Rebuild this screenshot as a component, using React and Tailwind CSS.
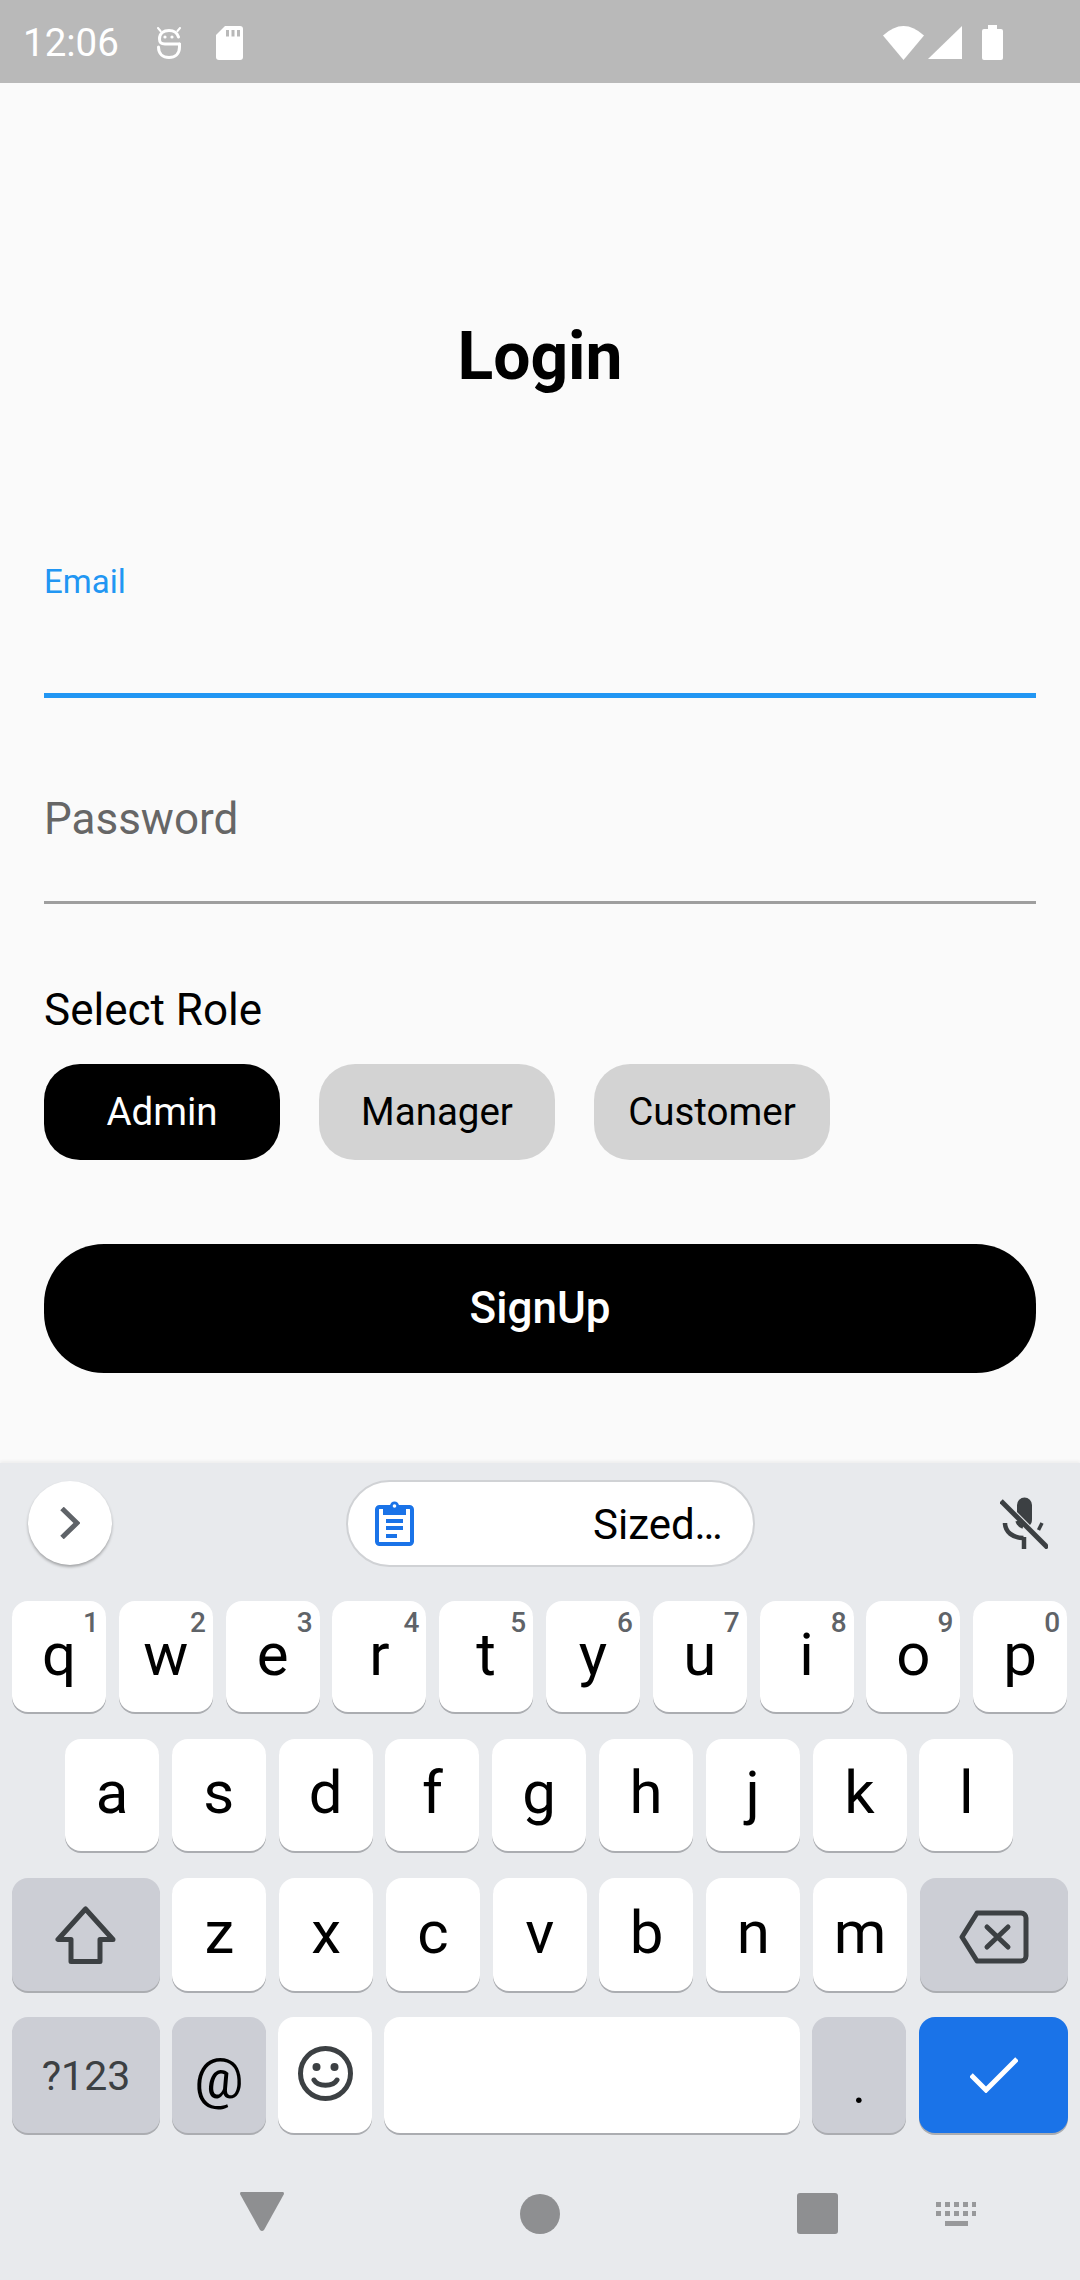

const F = "font-['Roboto',sans-serif]";

function Key({ ch, sup, className = "" }) {
  return (
    <div className={`relative w-[94px] flex-none bg-white rounded-[16px] shadow-[0_2px_0_#abadb1] flex items-center justify-center text-black text-[60px] leading-none pb-1 ${className}`}>
      {ch}
      {sup && <span className="absolute top-[7px] right-[7px] text-[28px] leading-[30px] font-medium text-[#5f6368]">{sup}</span>}
    </div>
  );
}

function Mod({ children, className = "" }) {
  return (
    <div className={`bg-[#ccced5] rounded-[16px] shadow-[0_2px_0_#abadb1] flex items-center justify-center text-[#3c4043] ${className}`}>
      {children}
    </div>
  );
}

function BotIcon() {
  return (
    <svg width="24" height="32" viewBox="0 0 24 32" fill="none" stroke="#fff" strokeWidth="3" strokeLinecap="round">
      <path d="M21.500 10C20 5 16 3.500 12 3.500C7 3.500 2.500 6 2.500 12C2.500 16 4 17 8 17H22.500" />
      <path d="M22.500 17V20C22.500 27 18 30.500 12 30.500C6 30.500 1.500 27 1.500 20" />
      <path d="M1 1l2.500 3M23 1l-2.500 3" strokeWidth="2" />
      <circle cx="8" cy="10" r="1.600" fill="#fff" stroke="none" />
      <circle cx="15" cy="10" r="1.600" fill="#fff" stroke="none" />
    </svg>
  );
}

function SdIcon() {
  return (
    <svg width="27" height="34" viewBox="0 0 27 34">
      <path fill="#fff" d="M9 0H24a3 3 0 0 1 3 3V31a3 3 0 0 1-3 3H3a3 3 0 0 1-3-3V9Z" />
      <path fill="#b9b9b9" d="M10 4h3v6.500h-3zM15.500 4h3v6.500h-3zM21 4h3v6.500h-3z" />
    </svg>
  );
}

function StatusRight() {
  return (
    <div className="ml-auto mr-[77px] flex items-center">
      <svg width="41" height="34" viewBox="0 0 41 34"><path fill="#fff" d="M0 9.500Q20.500 -9.500 41 9.500L20.500 34Z" /></svg>
      <svg className="ml-[4px]" width="34" height="33" viewBox="0 0 34 33"><path fill="#fff" d="M0 33L34 0V33Z" /></svg>
      <svg className="ml-[20px]" width="21" height="35" viewBox="0 0 21 35"><path fill="#fff" d="M6 0H15V4H19a2 2 0 0 1 2 2V33a2 2 0 0 1-2 2H2a2 2 0 0 1-2-2V6a2 2 0 0 1 2-2H6Z" /></svg>
    </div>
  );
}

function Clipboard() {
  return (
    <svg width="39" height="45" viewBox="0 0 39 45" fill="none">
      <rect x="2" y="6" width="35" height="37" rx="2.500" stroke="#1a73e8" strokeWidth="4" />
      <path fill="#1a73e8" d="M8 5H31V14H8Z" />
      <circle cx="19.500" cy="5" r="4.500" fill="#1a73e8" />
      <circle cx="19.500" cy="5" r="1.800" fill="#fff" />
      <path stroke="#1a73e8" strokeWidth="4" d="M11 20H28M11 27H28M11 35H22" />
    </svg>
  );
}

function MicOff() {
  return (
    <svg width="48" height="52" viewBox="0 0 48 52" fill="none" stroke="#3c4043">
      <path fill="#3c4043" stroke="none" d="M17 8A7.500 7.500 0 0 1 32 8V22C32 25 31.500 26.500 30 28L17 15Z" />
      <path strokeWidth="3.500" d="M17 24C18 27 20 29 23 30" />
      <path strokeWidth="4.500" d="M5 26C5 35 13 41 23.500 41" />
      <path strokeWidth="4.500" d="M24 40V52" />
      <path strokeWidth="3.500" d="M42 26L38.500 33" />
      <path strokeWidth="5" d="M1 4L48 51" />
    </svg>
  );
}

export default function App() {
  const row1 = [["q","1"],["w","2"],["e","3"],["r","4"],["t","5"],["y","6"],["u","7"],["i","8"],["o","9"],["p","0"]];
  const row2 = ["a","s","d","f","g","h","j","k","l"];
  const row3 = ["z","x","c","v","b","n","m"];
  return (
    <div className={`w-[1080px] h-[2280px] overflow-hidden flex flex-col bg-[#fafafa] ${F}`}>
      <div className="h-[83px] pt-[2px] bg-[#b9b9b9] flex items-center text-white shrink-0">
        <span className="ml-[23px] pt-[1px] text-[38.5px] leading-none">12:06</span>
        <span className="ml-[38px] flex"><BotIcon /></span>
        <span className="ml-[35px] flex"><SdIcon /></span>
        <StatusRight />
      </div>

      <div className="h-[1380px] shrink-0 px-[44px] flex flex-col">
        <h1 className="mt-[235px] h-[77px] text-center text-[66px] leading-[77px] font-bold text-black">Login</h1>
        <label className="mt-[167px] h-[40px] text-[33px] leading-[40px] text-[#2196f3]">Email</label>
        <div className="mt-[91px] h-[5px] bg-[#2196f3]" />
        <div className="mt-[96px] h-[50px] text-[44px] leading-[50px] text-[#666666]">Password</div>
        <div className="mt-[57px] h-[3px] bg-[#9e9e9e]" />
        <div className="mt-[81px] h-[50px] text-[44px] leading-[50px] text-black">Select Role</div>
        <div className="mt-[29px] flex gap-[39px]">
          <div className="w-[236px] h-[96px] rounded-[36px] bg-black text-white text-[38.5px] flex items-center justify-center">Admin</div>
          <div className="w-[236px] h-[96px] rounded-[36px] bg-[#d3d3d3] text-black text-[38.5px] flex items-center justify-center">Manager</div>
          <div className="w-[236px] h-[96px] rounded-[36px] bg-[#d3d3d3] text-black text-[38.5px] flex items-center justify-center">Customer</div>
        </div>
        <div className="mt-[84px] h-[129px] pb-[2px] rounded-[60px] bg-black text-white text-[44px] font-medium flex items-center justify-center">SignUp</div>
      </div>

      <div className="flex-1 bg-[#e8eaed] flex flex-col shadow-[0_-2px_3px_rgba(0,0,0,0.05)]">
        <div className="h-[120px] flex items-center">
          <div className="ml-[28px] w-[84px] h-[84px] rounded-full bg-white shadow-[0_2px_3px_rgba(0,0,0,0.3)] flex items-center justify-center">
            <svg width="20" height="32" viewBox="0 0 20 32" fill="none" stroke="#5f6368" strokeWidth="5"><path d="M2 1.500L17 16L2 30.500" /></svg>
          </div>
          <div className="ml-[234px] w-[409px] h-[87px] rounded-full bg-white border-2 border-[#d0d2d5] flex items-center pl-[27px]">
            <Clipboard />
            <span className="ml-[179px] pt-[3px] text-[42px] text-black leading-none">Sized…</span>
          </div>
          <div className="ml-[245px] flex"><MicOff /></div>
        </div>

        <div className="mt-[18px] px-[12px] flex gap-[12.8px] h-[111px]">
          {row1.map(([c, s]) => <Key key={c} ch={c} sup={s} />)}
        </div>
        <div className="mt-[27px] px-[65px] flex gap-[12.8px] h-[112px]">
          {row2.map((c) => <Key key={c} ch={c} />)}
        </div>
        <div className="mt-[27px] px-[12px] flex gap-[12.8px] h-[113px]">
          <Mod className="w-[147.5px] shrink-0">
            <svg width="61" height="58" viewBox="0 0 61 58" fill="none" stroke="#3c4043" strokeWidth="5" strokeLinejoin="round"><path d="M30.500 3L3 33.500H16V55.500H45V33.500H58Z" /></svg>
          </Mod>
          {row3.map((c) => <Key key={c} ch={c} />)}
          <Mod className="w-[148.5px] shrink-0 pt-[4px]">
            <svg width="70" height="54" viewBox="0 0 70 54" fill="none" stroke="#3c4043" strokeWidth="5" strokeLinejoin="round" strokeLinecap="round"><path d="M3 27L18 3H62a5 5 0 0 1 5 5V46a5 5 0 0 1-5 5H18Z" /><path d="M28 17L49 37M49 17L28 37" /></svg>
          </Mod>
        </div>
        <div className="mt-[26px] px-[12px] flex gap-[12px] h-[116px]">
          <Mod className="w-[148px] shrink-0 text-[41px] leading-none pt-[2px]">?123</Mod>
          <Mod className="w-[94px] shrink-0 text-black text-[55px] leading-none pt-[8px]">@</Mod>
          <Key ch={
            <svg width="55" height="55" viewBox="0 0 55 55" fill="none" stroke="#3c4043" strokeWidth="5"><circle cx="27.500" cy="27.500" r="25" /><circle cx="18.500" cy="21" r="4" fill="#3c4043" stroke="none" /><circle cx="36.500" cy="21" r="4" fill="#3c4043" stroke="none" /><path strokeLinecap="round" d="M16 34C20 41 35 41 39 34" /></svg>
          } />
          <div className="w-[416px] bg-white rounded-[16px] shadow-[0_2px_0_#abadb1]" />
          <Mod className="w-[94px] shrink-0 text-black text-[50px] leading-none pt-[22px]">.</Mod>
          <div className="ml-[1px] w-[149px] shrink-0 bg-[#1a73e8] rounded-[16px] shadow-[0_2px_0_#abadb1] flex items-center justify-center">
            <svg width="48" height="36" viewBox="0 0 48 36" fill="none" stroke="#fff" strokeWidth="5"><path d="M1 18L16 33L47 2" /></svg>
          </div>
        </div>

        <div className="flex-1 pt-[14px] flex items-center">
          <svg className="ml-[240px]" width="44" height="44" viewBox="0 0 44 44"><path fill="#8e8f91" d="M1 0H43Q44 0 44 2L24 38Q22 40 20 38L0 2Q0 0 1 0Z" /></svg>
          <div className="ml-[236px] w-[40px] h-[40px] rounded-full bg-[#8e8f91]" />
          <div className="ml-[237px] w-[41px] h-[41px] rounded-[3px] bg-[#8e8f91]" />
          <svg className="ml-[98px]" width="40" height="24" viewBox="0 0 40 24" fill="#98999b">
            <path d="M0 0h5v5h-5zM9 0h5v5h-5zM18 0h5v5h-5zM27 0h5v5h-5zM36 0h4v5h-4zM0 9h5v5h-5zM9 9h5v5h-5zM18 9h5v5h-5zM27 9h5v5h-5zM36 9h4v5h-4zM9 19h23v5h-23z" />
          </svg>
        </div>
      </div>
    </div>
  );
}
